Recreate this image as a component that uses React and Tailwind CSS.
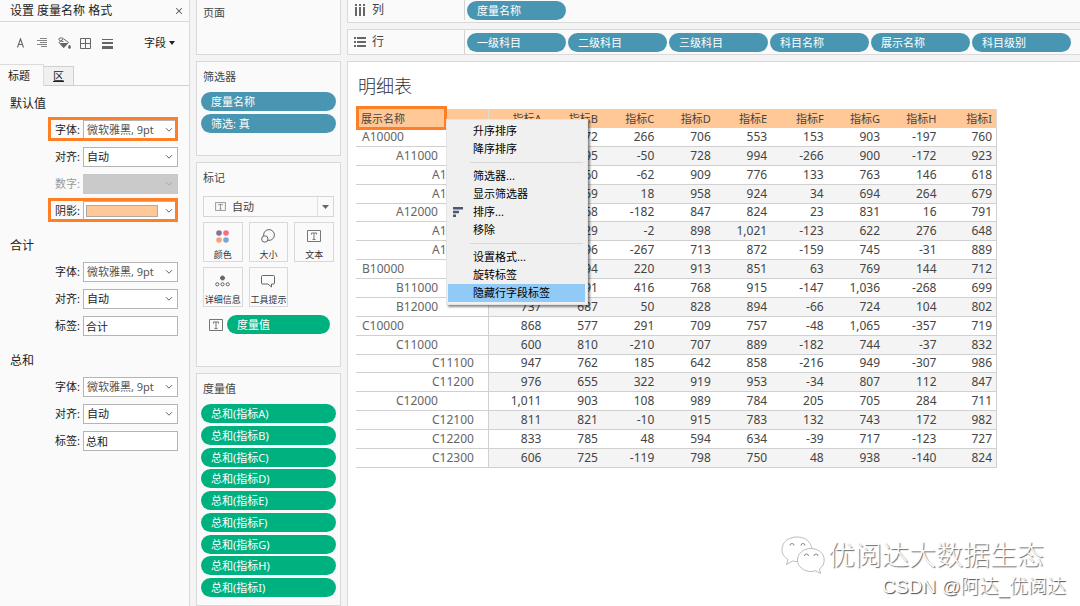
import { X } from 'lucide-react';

const columns = ['指标A', '指标B', '指标C', '指标D', '指标E', '指标F', '指标G', '指标H', '指标I'];

const rows = [
  { code: 'A10000', level: 1, values: ['812', '672', '266', '706', '553', '153', '903', '-197', '760'] },
  { code: 'A11000', level: 2, values: ['745', '595', '-50', '728', '994', '-266', '900', '-172', '923'] },
  { code: 'A11100', level: 3, values: ['698', '760', '-62', '909', '776', '133', '763', '146', '618'] },
  { code: 'A11200', level: 3, values: ['777', '759', '18', '958', '924', '34', '694', '264', '679'] },
  { code: 'A12000', level: 2, values: ['586', '768', '-182', '847', '824', '23', '831', '16', '791'] },
  { code: 'A12100', level: 3, values: ['827', '829', '-2', '898', '1,021', '-123', '622', '276', '648'] },
  { code: 'A12200', level: 3, values: ['629', '896', '-267', '713', '872', '-159', '745', '-31', '889'] },
  { code: 'B10000', level: 1, values: ['914', '694', '220', '913', '851', '63', '769', '144', '712'] },
  { code: 'B11000', level: 2, values: ['1,007', '591', '416', '768', '915', '-147', '1,036', '-268', '699'] },
  { code: 'B12000', level: 2, values: ['737', '687', '50', '828', '894', '-66', '724', '104', '802'] },
  { code: 'C10000', level: 1, values: ['868', '577', '291', '709', '757', '-48', '1,065', '-357', '719'] },
  { code: 'C11000', level: 2, values: ['600', '810', '-210', '707', '889', '-182', '744', '-37', '832'] },
  { code: 'C11100', level: 3, values: ['947', '762', '185', '642', '858', '-216', '949', '-307', '986'] },
  { code: 'C11200', level: 3, values: ['976', '655', '322', '919', '953', '-34', '807', '112', '847'] },
  { code: 'C12000', level: 2, values: ['1,011', '903', '108', '989', '784', '205', '705', '284', '711'] },
  { code: 'C12100', level: 3, values: ['811', '821', '-10', '915', '783', '132', '743', '172', '982'] },
  { code: 'C12200', level: 3, values: ['833', '785', '48', '594', '634', '-39', '717', '-123', '727'] },
  { code: 'C12300', level: 3, values: ['606', '725', '-119', '798', '750', '48', '938', '-140', '824'] },
];

const indents = { 1: 'pl-[6px]', 2: 'pl-[40px]', 3: 'pl-[76px]' };

const menuGroups = [
  ['升序排序', '降序排序'],
  ['筛选器...', '显示筛选器', '排序...', '移除'],
  ['设置格式...', '旋转标签', '隐藏行字段标签'],
];

function Chevron({ className }) {
  return (
    <svg className={`pointer-events-none absolute right-[5px] top-[7px] h-[6px] w-[8px] ${className}`} viewBox="0 0 8 6" fill="none" stroke="currentColor">
      <path d="M1 1.2 4 4.2 7 1.2" />
    </svg>
  );
}

function FieldRow({ id, label, marked, disabled, children }) {
  return (
    <div className="relative ml-[48px] flex h-5 w-[130px] items-center">
      <label htmlFor={id} className={`w-[35px] pr-[3px] text-right ${disabled ? 'text-[#999]' : 'text-[#222]'}`}>{label}:</label>
      {children}
      {marked && <span className="pointer-events-none absolute inset-x-0 -top-[3px] -bottom-px border-3 border-[#ff7f27]" />}
    </div>
  );
}

function SelectField({ id, label, value, marked, disabled, muted }) {
  return (
    <FieldRow id={id} label={label} marked={marked} disabled={disabled}>
      <div className="relative flex-1">
        <select
          id={id}
          disabled={disabled}
          className={`block h-5 w-full appearance-none border pl-[3px] opacity-100 ${disabled ? 'border-[#c8c8c8] bg-[#cacaca]' : 'border-[#b4b4b4] bg-white'} ${muted ? 'text-[#555]' : 'text-[#222]'}`}
        >
          <option>{value}</option>
        </select>
        <Chevron className={disabled ? 'text-[#aaa]' : 'text-[#666]'} />
      </div>
    </FieldRow>
  );
}

function ColorField({ id, label }) {
  return (
    <FieldRow id={id} label={label} marked>
      <div className="relative flex-1">
        <button id={id} type="button" className="flex h-5 w-full items-center border border-[#b4b4b4] bg-white pl-[2px]">
          <span className="h-3 w-[72px] border border-[#aaa] bg-[#ffc896]" />
        </button>
        <Chevron className="text-[#666]" />
      </div>
    </FieldRow>
  );
}

function TextField({ id, label, value }) {
  return (
    <FieldRow id={id} label={label}>
      <input id={id} type="text" defaultValue={value} className="h-5 w-0 flex-1 border border-[#b4b4b4] bg-white pl-[2px] text-[#222]" />
    </FieldRow>
  );
}

function Section({ title, children }) {
  return (
    <section>
      <h2 className="mb-[6px] h-5 pl-[10px] text-[12px] leading-5 text-[#222]">{title}</h2>
      <div className="flex flex-col gap-[7px]">{children}</div>
    </section>
  );
}

function FormatToolbar() {
  return (
    <div className="flex h-[42px] items-center text-[#666]">
      <button type="button" aria-label="字体" className="ml-[16px] w-[9px]">
        <svg className="h-[10px] w-[9px]" viewBox="0 0 9 10" fill="none" stroke="currentColor" strokeWidth="1.1"><path d="M1.500 9.500 4.500.8 7.500 9.500M2.500 6.500h4" /></svg>
      </button>
      <button type="button" aria-label="对齐" className="ml-[12px]">
        <svg className="h-[10px] w-[10px]" viewBox="0 0 10 10" stroke="currentColor"><path d="M3 .5h7M0 2.500h10M3 4.500h7M0 6.500h10M4 8.500h6" strokeWidth=".8" /></svg>
      </button>
      <button type="button" aria-label="阴影" className="ml-[11px]">
        <svg className="h-[13px] w-[13px]" viewBox="0 0 13 13" fill="none" stroke="currentColor">
          <path d="M1 5.500 5.500 1.800 10.500 5.500 5.700 10.500zM5.500 4.500C3 4.500.8 3.500.8 2.200S3 .6 5 1.300" />
          <path d="M2.500 6.500h7L5.700 10.500z" fill="currentColor" />
          <path d="M11.500 8c-1 1.600-1.300 3.500 0 3.500s1-1.900 0-3.500z" fill="currentColor" />
        </svg>
      </button>
      <button type="button" aria-label="边界" className="ml-[9px]">
        <svg className="h-[11px] w-[11px]" viewBox="0 0 11 11" fill="none" stroke="currentColor"><path d="M.5.5h10v10H.5zM5.500.5v10M.5 5.500h10" /></svg>
      </button>
      <button type="button" aria-label="线" className="ml-[11px]">
        <svg className="h-[11px] w-[11px]" viewBox="0 0 11 11" fill="currentColor"><path d="M0 1h11v1H0zM0 4h11v2H0zM0 8h11v3H0z" /></svg>
      </button>
      <button type="button" className="ml-[31px] flex items-center gap-[3px] text-[#222]">
        字段
        <svg className="h-[4px] w-[6px]" viewBox="0 0 6 4" fill="currentColor"><path d="M0 0h6L3 4z" /></svg>
      </button>
    </div>
  );
}

function FormatPanel() {
  return (
    <aside className="w-[190px] shrink-0 border-r border-[#dcdcdc] bg-[#fafafa]">
      <div className="flex h-[22px] items-center justify-between border-b border-[#d8d8d8] pr-[5px] pl-[10px]">
        <h1 className="text-[12px] text-[#222]">设置 度量名称 格式</h1>
        <button type="button" aria-label="关闭" className="text-[#555]"><X size={10} strokeWidth={2.5} /></button>
      </div>
      <FormatToolbar />
      <div role="tablist" className="flex h-[22px] items-end">
        <button type="button" role="tab" aria-selected="true" className="h-[22px] w-[44px] border-t border-r border-[#dcdcdc] pt-px pr-[5px] text-[#222]">标题</button>
        <button type="button" role="tab" aria-selected="false" className="h-[20px] w-[30px] border-t border-r border-b border-[#d0d0d0] bg-[#f0f0f0] text-[#222] underline">区</button>
        <span className="h-px flex-1 bg-[#d0d0d0]" />
      </div>
      <div className="flex flex-col gap-[15px] pt-[8px]">
        <Section title="默认值">
          <SelectField id="default-font" label="字体" value="微软雅黑, 9pt" marked muted />
          <SelectField id="default-align" label="对齐" value="自动" />
          <SelectField id="default-number" label="数字" value="" disabled />
          <ColorField id="default-shade" label="阴影" />
        </Section>
        <Section title="合计">
          <SelectField id="total-font" label="字体" value="微软雅黑, 9pt" muted />
          <SelectField id="total-align" label="对齐" value="自动" />
          <TextField id="total-label" label="标签" value="合计" />
        </Section>
        <Section title="总和">
          <SelectField id="sum-font" label="字体" value="微软雅黑, 9pt" muted />
          <SelectField id="sum-align" label="对齐" value="自动" />
          <TextField id="sum-label" label="标签" value="总和" />
        </Section>
      </div>
    </aside>
  );
}

function Pill({ green, className, children }) {
  return (
    <button type="button" className={`h-[19px] shrink-0 rounded-full pl-[10px] text-left leading-[19px] text-white ${green ? 'bg-[#00b180]' : 'bg-[#4996b2]'} ${className}`}>
      {children}
    </button>
  );
}

function TextIcon({ className }) {
  return (
    <svg className={className} viewBox="0 0 14 12" fill="none" stroke="#777">
      <path d="M.5.5h13v11H.5z" />
      <path d="M4.500 4.500v-1.500h5v1.500M7 3v6.500M5.500 9.500h3" />
    </svg>
  );
}

const markIcons = {
  颜色: (
    <svg className="h-[13px] w-[13px]" viewBox="0 0 13 13">
      <circle cx="3" cy="3" r="2.800" fill="#84719c" />
      <circle cx="10" cy="3" r="2.800" fill="#f96d80" />
      <circle cx="3" cy="10" r="2.800" fill="#f9a275" />
      <circle cx="10" cy="10" r="2.800" fill="#7ea6d0" />
    </svg>
  ),
  大小: (
    <svg className="h-[14px] w-[14px]" viewBox="0 0 14 14" fill="none" stroke="#666">
      <circle cx="8" cy="6" r="5.400" />
      <circle cx="3.800" cy="10" r="3.200" fill="#fafafa" />
    </svg>
  ),
  文本: <TextIcon className="h-[12px] w-[14px]" />,
  详细信息: (
    <svg className="h-[12px] w-[15px]" viewBox="0 0 15 12" fill="none" stroke="#666">
      <circle cx="7.500" cy="3" r="2" fill="#666" />
      <circle cx="2.300" cy="9.300" r="1.600" />
      <circle cx="7.500" cy="9.300" r="1.600" />
      <circle cx="12.700" cy="9.300" r="1.600" />
    </svg>
  ),
  工具提示: (
    <svg className="h-[13px] w-[14px]" viewBox="0 0 14 13" fill="none" stroke="#666">
      <path d="M1.500.5h11q1 0 1 1v6.500q0 1-1 1H10.500v3L7 9H1.500q-1 0-1-1V1.500q0-1 1-1z" />
    </svg>
  ),
};

function Card({ title, className, children }) {
  return (
    <section className={`border border-[#d9d9d9] bg-[#fafafa] px-[4px] ${className}`}>
      <h2 className="h-5 pl-[2px] leading-5 text-[#444]">{title}</h2>
      {children}
    </section>
  );
}

function Cards() {
  return (
    <div className="ml-[6px] flex w-[145px] shrink-0 flex-col gap-[6px]">
      <Card title="页面" className="h-[55px] border-t-0 pt-[3px]" />
      <Card title="筛选器" className="h-[95px] pt-[5px]">
        <div className="mt-[5px] flex flex-col gap-[3px]">
          <Pill>度量名称</Pill>
          <Pill>筛选: 真</Pill>
        </div>
      </Card>
      <Card title="标记" className="h-[205px] pt-[5px]">
        <div className="mx-[2px]">
          <button type="button" className="mt-[8px] flex h-[21px] w-full items-center border border-[#d6d6d6] pl-[11px] text-[#444]">
            <TextIcon className="mr-[6px] h-[9px] w-[11px]" />
            自动
            <span className="ml-auto flex h-full w-[16px] items-center justify-center border-l border-[#e0e0e0]">
              <svg className="h-[4px] w-[7px]" viewBox="0 0 7 4" fill="#666"><path d="M0 0h7L3.500 4z" /></svg>
            </span>
          </button>
          <div className="mt-[5px] grid grid-cols-3 gap-x-[6px] gap-y-[5px]">
            {Object.keys(markIcons).map((name) => (
              <button key={name} type="button" className="flex h-[40px] flex-col items-center border border-[#d9d9d9] text-[9px] leading-3 whitespace-nowrap text-[#333]">
                <span className="flex h-[26px] items-center">{markIcons[name]}</span>
                {name}
              </button>
            ))}
          </div>
          <div className="mt-[8px] flex items-center pr-[4px] pl-[6px]">
            <TextIcon className="mr-[4px] h-[12px] w-[14px]" />
            <Pill green className="flex-1">度量值</Pill>
          </div>
        </div>
      </Card>
      <Card title="度量值" className="flex-1 pt-[5px]">
        <div className="mt-[5px] mb-[8px] flex h-[193px] flex-col justify-between">
          {columns.map((name) => <Pill key={name} green>总和({name})</Pill>)}
        </div>
      </Card>
    </div>
  );
}

function Shelf({ label, icon, items, className }) {
  return (
    <div className={`flex items-center border-b border-l border-[#d9d9d9] bg-[#fafafa] ${className}`}>
      <div className="flex w-[117px] items-center gap-[6px] self-stretch border-r border-[#d4d4d4] pl-[6px] text-[12px] text-[#444]">
        {icon}
        {label}
      </div>
      <div className="flex gap-[2px] pl-[2px]">
        {items.map((item) => <Pill key={item} className="w-[99px]">{item}</Pill>)}
      </div>
    </div>
  );
}

const columnsIcon = (
  <svg className="h-[12px] w-[12px]" viewBox="0 0 12 12" fill="#666">
    <path d="M1 0h2v2H1zM5 0h2v2H5zM9 0h2v2H9zM1 3h2v9H1zM5 3h2v9H5zM9 3h2v9H9z" />
  </svg>
);

const rowsIcon = (
  <svg className="h-[10px] w-[12px]" viewBox="0 0 12 10" fill="#666">
    <path d="M0 0h2v2H0zM3 0h9v2H3zM0 4h2v2H0zM3 4h9v2H3zM0 8h2v2H0zM3 8h9v2H3z" />
  </svg>
);

function ContextMenu() {
  return (
    <div role="menu" className="absolute top-[10px] left-[90px] w-[142px] border border-[#e4e4e4] bg-[#f0f0f0] px-px py-[2px] shadow-[2px_2px_2px_rgba(0,0,0,0.45)]">
      {menuGroups.map((group, i) => (
        <div key={group[0]}>
          {i > 0 && <hr className="my-1 mr-[3px] ml-[22px] border-[#d8d8d8]" />}
          {group.map((item) => (
            <button
              key={item}
              type="button"
              role="menuitem"
              className={`flex h-[18px] w-[137px] items-center text-left text-black ${item === '隐藏行字段标签' ? 'bg-[#91c9f7]' : ''}`}
            >
              <span className="w-[25px] pl-[5px]">
                {item === '排序...' && (
                  <svg className="h-[10px] w-[10px]" viewBox="0 0 10 10" fill="#4a5870"><path d="M0 0h10v2.500H0zM0 3.700h6v2.500H0zM0 7.500h3V10H0z" /></svg>
                )}
              </span>
              {item}
            </button>
          ))}
        </div>
      ))}
    </div>
  );
}

function DetailTable() {
  return (
    <div className="relative w-[641px]">
      <table className="h-[359px] w-full table-fixed border-separate border-spacing-0 text-[12px] leading-[16px]">
        <thead>
          <tr className="h-[19px] bg-[#ffc896] text-[11px] text-[#444]">
            <th scope="col" className="w-[133px] border-r border-[#ddd] pl-[5px] text-left font-normal">展示名称</th>
            {columns.map((name) => <th key={name} scope="col" className="pr-[4px] text-right font-normal last:border-r last:border-[#ddd]">{name}</th>)}
          </tr>
        </thead>
        <tbody>
          {rows.map((row) => (
            <tr key={row.code} className="group">
              <th scope="row" className={`border-r border-b border-[#d0d0d0] text-left font-normal text-[#666] ${indents[row.level]}`}>{row.code}</th>
              {row.values.map((value, i) => (
                <td key={columns[i]} className="border-b border-[#d0d0d0] pr-[4px] text-right text-[#444] group-even:bg-[#f4f4f4] last:border-r">{value}</td>
              ))}
            </tr>
          ))}
        </tbody>
      </table>
      <span className="pointer-events-none absolute -top-[3px] left-0 h-[24px] w-[91px] border-3 border-[#ff7f27]" />
      <ContextMenu />
    </div>
  );
}

function Watermark() {
  return (
    <div className="pointer-events-none absolute right-[14px] bottom-[6px] flex flex-col items-end font-light text-white [text-shadow:1px_1px_1px_#666]">
      <div className="mr-[22px] flex items-center gap-[3px] text-[27px] leading-[34px]">
        <svg className="h-[38px] w-[44px]" viewBox="0 0 44 38" fill="#fff" stroke="#bbb" strokeWidth="1">
          <path d="M16 1C7 1 1 6.500 1 13.500c0 4.500 2.500 8 6 10L5.500 28.500l6-3.500c2 .5 4 .7 6 .5C31 24 33 14 29 7.500 26.500 3.500 22 1 16 1z" />
          <path d="M30 12.500c-7.500 0-13.500 5-13.500 11.500S22.500 35.500 30 35.500c1.700 0 3.300-.2 4.700-.7l5 2.700-1.300-4.500c3-2 4.800-5.300 4.800-9C43.200 17.500 37.500 12.500 30 12.500z" />
          <g fill="none" stroke="#888">
            <path d="M9 9.500a2 2 0 0 1 4 0M20 9.500a2 2 0 0 1 4 0M23.500 20a2 2 0 0 1 4 0M33 20a2 2 0 0 1 4 0" />
          </g>
        </svg>
        优阅达大数据生态
      </div>
      <div className="font-['Liberation_Sans','Noto_Sans_CJK_SC',sans-serif] text-[19px] leading-[26px] [text-shadow:1px_1px_1px_#444]">CSDN @阿达_优阅达</div>
    </div>
  );
}

export default function App() {
  return (
    <div className="relative flex min-h-screen overflow-hidden bg-[#f4f4f4] font-['Noto_Sans','Noto_Sans_CJK_SC',sans-serif] text-[11px] leading-4">
      <FormatPanel />
      <Cards />
      <main className="ml-[6px] flex min-w-0 flex-1 flex-col gap-[6px]">
        <Shelf label="列" icon={columnsIcon} items={['度量名称']} className="h-[23px] pb-[2px]" />
        <Shelf label="行" icon={rowsIcon} items={['一级科目', '二级科目', '三级科目', '科目名称', '展示名称', '科目级别']} className="h-[26px] border-t" />
        <div className="flex-1 border-t border-l border-[#d9d9d9] bg-white pl-[8px]">
          <h2 className="mt-[10px] mb-[9px] pl-[2px] text-[18px] leading-[28px] font-light text-[#333]">明细表</h2>
          <DetailTable />
        </div>
      </main>
      <Watermark />
    </div>
  );
}
